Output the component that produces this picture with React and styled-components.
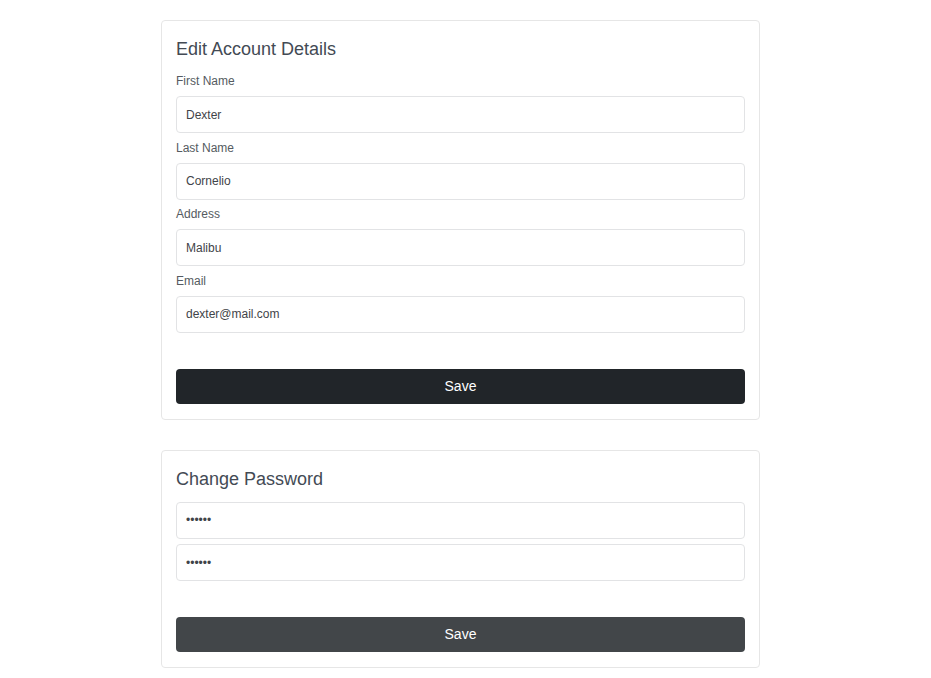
import React from "react";
import styled, { createGlobalStyle } from "styled-components";

const GlobalStyle = createGlobalStyle`
  body {
    margin: 0;
    background: #ffffff;
    font-family: "Liberation Sans", Arial, sans-serif;
  }
`;

const Page = styled.main`
  display: flex;
  flex-direction: column;
  align-items: flex-start;
  gap: 30px;
  padding: 20px 0 0 161px;
`;

const Card = styled.form`
  width: 599px;
  box-sizing: border-box;
  border: 1px solid #e6e6e6;
  border-radius: 4px;
  padding: 15px 14px 15px;
  display: flex;
  flex-direction: column;
`;

const Title = styled.h2`
  margin: 0 0 10px;
  font-size: 18px;
  line-height: 26px;
  font-weight: 400;
  color: #434a54;
`;

const Field = styled.div`
  display: flex;
  flex-direction: column;
  margin-bottom: 5.67px;
`;

const Label = styled.label`
  font-size: 12px;
  line-height: 18px;
  color: #555b61;
  margin-bottom: 6px;
`;

const Input = styled.input`
  height: 37px;
  box-sizing: border-box;
  border: 1px solid #e2e3e5;
  border-radius: 4px;
  padding: 0 9px;
  font-family: inherit;
  font-size: 12px;
  color: #3f4449;
  background: #fff;
  outline: none;
`;

const SaveButton = styled.button`
  margin-top: 30px;
  height: 35px;
  border: none;
  border-radius: 4px;
  background: ${(p) => (p.$hover ? "#424649" : "#212529")};
  color: #fff;
  font-family: inherit;
  font-size: 14px;
  cursor: pointer;
`;

const ACCOUNT_FIELDS = [
  { id: "first", label: "First Name", value: "Dexter" },
  { id: "last", label: "Last Name", value: "Cornelio" },
  { id: "address", label: "Address", value: "Malibu" },
  { id: "email", label: "Email", value: "dexter@mail.com" },
];

export default function App() {
  return (
    <>
      <GlobalStyle />
      <Page>
        <Card onSubmit={(e) => e.preventDefault()}>
          <Title>Edit Account Details</Title>
          {ACCOUNT_FIELDS.map((f) => (
            <Field key={f.id}>
              <Label htmlFor={f.id}>{f.label}</Label>
              <Input id={f.id} defaultValue={f.value} />
            </Field>
          ))}
          <SaveButton type="submit">Save</SaveButton>
        </Card>

        <Card onSubmit={(e) => e.preventDefault()}>
          <Title>Change Password</Title>
          <Field>
            <Input type="password" defaultValue="secret" />
          </Field>
          <Field>
            <Input type="password" defaultValue="secret" />
          </Field>
          <SaveButton type="submit" $hover>
            Save
          </SaveButton>
        </Card>
      </Page>
    </>
  );
}
